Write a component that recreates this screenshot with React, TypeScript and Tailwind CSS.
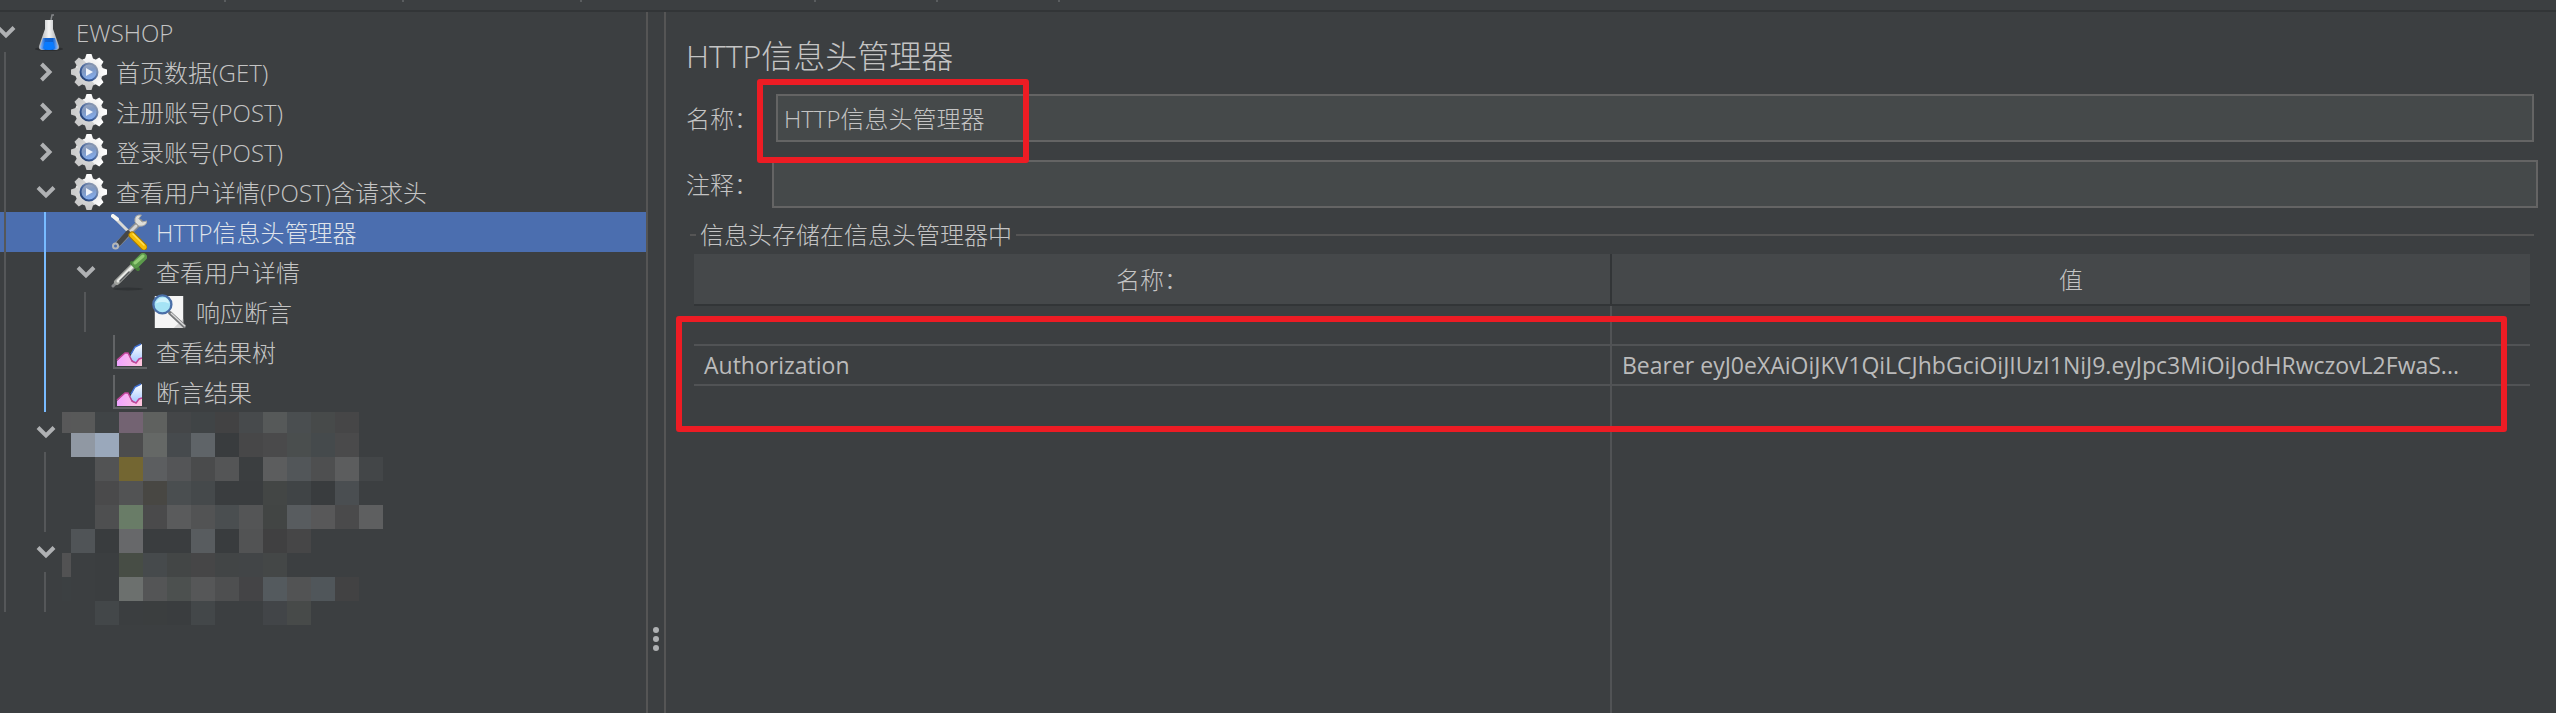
import { useState } from 'react'
import clsx from 'clsx'

type IconName = 'flask' | 'gear' | 'tools' | 'dropper' | 'assertion' | 'chart'
type Guide = 'gray' | 'blue'

type Node = {
  id: string
  label: string
  icon?: IconName
  guides: Guide[]
  toggle?: 'open' | 'closed'
}

const nodes: Node[] = [
  { id: 'plan', label: 'EWSHOP', icon: 'flask', guides: [], toggle: 'open' },
  { id: 'home', label: '首页数据(GET)', icon: 'gear', guides: ['gray'], toggle: 'closed' },
  { id: 'register', label: '注册账号(POST)', icon: 'gear', guides: ['gray'], toggle: 'closed' },
  { id: 'login', label: '登录账号(POST)', icon: 'gear', guides: ['gray'], toggle: 'closed' },
  { id: 'detail', label: '查看用户详情(POST)含请求头', icon: 'gear', guides: ['gray'], toggle: 'open' },
  { id: 'header', label: 'HTTP信息头管理器', icon: 'tools', guides: ['gray', 'blue'] },
  { id: 'sampler', label: '查看用户详情', icon: 'dropper', guides: ['gray', 'blue'], toggle: 'open' },
  { id: 'assert', label: '响应断言', icon: 'assertion', guides: ['gray', 'blue', 'gray'] },
  { id: 'results', label: '查看结果树', icon: 'chart', guides: ['gray', 'blue'] },
  { id: 'assertResults', label: '断言结果', icon: 'chart', guides: ['gray', 'blue'] },
  { id: 'hidden1', label: '', guides: ['gray'], toggle: 'open' },
  { id: 'hidden2', label: '', guides: ['gray', 'gray'] },
  { id: 'hidden3', label: '', guides: ['gray', 'gray'] },
  { id: 'hidden4', label: '', guides: ['gray'], toggle: 'open' },
  { id: 'hidden5', label: '', guides: ['gray', 'gray'] },
]

// censored part of the tree, one colour per block, '' is see-through
const mosaic = [
  ['#585859', '#585959', '#404446', '#736372', '#5f615f', '#444648', '#404446', '#424243', '#474a4c', '#565959', '#4a4e50', '#474a4a', '#464647', ''],
  ['', '#9098a3', '#9aa8bb', '#4c4c4d', '#656866', '#464a4d', '#5f6468', '#393c3e', '#474748', '#4a4a4b', '#4a4e4e', '#454a4c', '#4a4a4b', ''],
  ['', '', '#525354', '#736632', '#5c5e60', '#545557', '#4a4b4c', '#545556', '#3b3e40', '#5c5d5e', '#525659', '#4e4f50', '#5c5d5e', '#434648'],
  ['', '', '#4a4a4b', '#525354', '#484743', '#4a4e50', '#45494b', '#3a3d3f', '#3a3d3f', '#434645', '#404446', '#393c3e', '#4a4e51', ''],
  ['', '', '#4e4f50', '#697c67', '#4a4a4b', '#5a5b5c', '#525354', '#4a4e50', '#545556', '#424544', '#585c5f', '#585859', '#4a4a4b', '#5e5f60'],
  ['', '#505457', '#393c3e', '#67686a', '#3a3d3f', '#3a3d3f', '#585c5f', '#393c3e', '#525354', '#404041', '#464647', '', '', ''],
  ['#525253', '', '#3b3e40', '#474d45', '#464a4c', '#434646', '#464647', '#424546', '#424547', '#444747', '', '', '', ''],
  ['#3c4042', '', '#3b3e40', '#6c706e', '#545556', '#4c504f', '#565758', '#4e4f50', '#444446', '#545a5e', '#525354', '#50565a', '#424243', ''],
  ['', '', '#434749', '#3b3e40', '#3b3e3f', '#3a3d3f', '#434749', '', '', '#424548', '#474a49', '', '', ''],
]

const Mosaic = () => (
  <svg
    className="absolute left-[62px] top-[400px] pointer-events-none"
    width="321"
    height="213"
    shapeRendering="crispEdges"
    aria-hidden="true"
  >
    {mosaic.map((row, y) =>
      row.map((color, x) =>
        color ? (
          <rect
            key={`${x}-${y}`}
            x={x === 0 ? 0 : x * 24 - 15}
            y={y === 0 ? 0 : y * 24 - 3}
            width={x === 0 ? 9 : 24}
            height={y === 0 ? 21 : 24}
            fill={color}
          />
        ) : null
      )
    )}
  </svg>
)

const Flask = () => (
  <svg width="36" height="40" viewBox="0 0 36 40">
    <defs>
      <linearGradient id="glass" x1="0" x2="1">
        <stop offset="0" stopColor="#a4a8ac" />
        <stop offset=".5" stopColor="#f4f4f4" />
        <stop offset="1" stopColor="#9b9fa3" />
      </linearGradient>
      <linearGradient id="liquid" x1="0" x2="1">
        <stop offset="0" stopColor="#8dbbff" />
        <stop offset=".3" stopColor="#1465d2" />
        <stop offset=".7" stopColor="#0b5fd0" />
        <stop offset="1" stopColor="#8dbbff" />
      </linearGradient>
    </defs>
    <ellipse cx="18" cy="37" rx="14" ry="2" fill="#2c2e30" />
    <path d="M20 8 21 3h2" stroke="#85888a" strokeWidth="1.5" fill="none" />
    <path d="M14 8h8v9l6 17q1 4-4 4H12q-5 0-4-4l6-17z" fill="url(#glass)" />
    <path d="M12 26h12l3 9q0 3-5 3h-8q-5 0-5-3z" fill="url(#liquid)" />
    <path d="M12 36q6 4 12 0l-2-6h-8z" fill="#0a7bff" />
  </svg>
)

const Gear = () => (
  <svg width="36" height="36" viewBox="0 0 36 36">
    <defs>
      <linearGradient id="metal" gradientUnits="userSpaceOnUse" x1="0" x2="0" y1="0" y2="36">
        <stop offset="0" stopColor="#ffffff" />
        <stop offset=".5" stopColor="#e0e0e0" />
        <stop offset="1" stopColor="#c8c8c8" />
      </linearGradient>
      <linearGradient id="ring" x1="0" x2=".3" y1="0" y2="1">
        <stop offset="0" stopColor="#a3acbc" />
        <stop offset=".5" stopColor="#7f98c2" />
        <stop offset="1" stopColor="#86aeee" />
      </linearGradient>
      <linearGradient id="rim" x1="1" x2="0" y1="0" y2="1">
        <stop offset="0" stopColor="#a3abb8" />
        <stop offset=".6" stopColor="#3f609c" />
        <stop offset="1" stopColor="#1c3768" />
      </linearGradient>
    </defs>
    <g fill="url(#metal)">
      <circle cx="18" cy="18" r="14" />
      {[0, 45, 90, 135].map(angle => (
        <path
          key={angle}
          d={angle % 90 ? 'M15 0.500h6l1.500 6v23l-1.500 6h-6l-1.500-6v-23z' : 'M15.500 0h5l2 6v24l-2 6h-5l-2-6V6z'}
          transform={`rotate(${angle} 18 18)`}
        />
      ))}
    </g>
    <circle cx="18" cy="18" r="8.500" fill="url(#ring)" stroke="url(#rim)" strokeWidth="2" />
    <path d="M15 14v8l7-4z" fill="#f0f3fa" />
  </svg>
)

const Tools = () => (
  <svg width="36" height="36" viewBox="0 0 36 36" fill="none" strokeLinecap="round">
    <path d="M3 3 20 20" stroke="#d9d9d5" strokeWidth="3" />
    <path d="M2 2 6 5" stroke="#f7f7f3" strokeWidth="4" />
    <path d="M29 8 5 32" stroke="#8d8f90" strokeWidth="6" />
    <path d="M25 12 14 23" stroke="#d4d4d2" strokeWidth="3" />
    <path d="M17 19 8 29" stroke="#444648" strokeWidth="5" />
    <circle cx="4.500" cy="32" r="2.500" fill="#4b6eaf" stroke="#b4b6b8" strokeWidth="2" />
    <path d="M30 1q-7-1-6 7l4 4q7 1 8-5l-5 1-3-3z" fill="#deded9" stroke="#aaa9a4" strokeWidth="1" />
    <path d="M21 21 33 33" stroke="#a77a00" strokeWidth="7" />
    <path d="M21 21 33 33" stroke="#f5bd05" strokeWidth="5" />
    <path d="M22 20 33 31" stroke="#ffdf57" strokeWidth="1.500" />
  </svg>
)

const Dropper = () => (
  <svg width="36" height="38" viewBox="0 0 36 38" fill="none" strokeLinecap="round">
    <ellipse cx="17" cy="36" rx="15" ry="1.500" fill="#303335" />
    <path d="M2 33 8 27" stroke="#858789" strokeWidth="3" />
    <path d="M6 29 22 13" stroke="#a1a39f" strokeWidth="6" />
    <path d="M7 28 22 13" stroke="#e9eae6" strokeWidth="3" />
    <path d="M9 28 18 19" stroke="#55585a" strokeWidth="1.500" />
    <path d="M21 10 27 16" stroke="#447c38" strokeWidth="4" />
    <path d="M25 11 32 4" stroke="#5b9a4b" strokeWidth="8" />
    <path d="M24 10 32 3" stroke="#91cb75" strokeWidth="3" />
  </svg>
)

const Assertion = () => (
  <svg width="38" height="38" viewBox="0 0 38 38" fill="none">
    <path d="M4 2h30v34H4z" fill="#f5f5f5" />
    <path d="M24 36 34 26v10z" fill="#d5d5d5" />
    <path d="M20 20 35 34" stroke="#77797b" strokeWidth="4" strokeLinecap="round" />
    <path d="M21 20 36 34" stroke="#dadada" strokeWidth="1.500" />
    <circle cx="12" cy="11" r="9.500" fill="#a5e3f5" stroke="#4a6fa8" strokeWidth="2.500" />
    <path d="M5 10q2-6 8-6t6 6q-7-3-14 0z" fill="#d0f3fc" />
  </svg>
)

const Chart = () => (
  <svg width="36" height="36" viewBox="0 0 36 36" fill="none">
    <defs>
      <linearGradient id="pink" x1="0" x2="1">
        <stop offset="0" stopColor="#f0a3ff" />
        <stop offset="1" stopColor="#ffc5dc" />
      </linearGradient>
      <linearGradient id="sky" x1="0" x2="0" y1="0" y2="1">
        <stop offset="0" stopColor="#ffffff" />
        <stop offset="1" stopColor="#9dc3ff" />
      </linearGradient>
    </defs>
    <path d="M3 1v33h33" stroke="#626466" strokeWidth="2" />
    <path d="M19 23 24 13l7-3v17l-7 3z" fill="url(#sky)" />
    <path d="M20 20 24 13l6-3" stroke="#3f6fd0" strokeWidth="1.500" />
    <path d="M6 32v-5l8-8h3l4 9 4 1 3-4 3-1v8z" fill="url(#pink)" />
    <path d="m6 26 8-7h3l4 8 4 2 3-4 3-1" stroke="#c2459b" strokeWidth="1.500" />
  </svg>
)

const icons: Record<IconName, () => React.JSX.Element> = {
  flask: Flask,
  gear: Gear,
  tools: Tools,
  dropper: Dropper,
  assertion: Assertion,
  chart: Chart,
}

const TreeRow = ({ node, selected, onSelect }: { node: Node; selected: boolean; onSelect: () => void }) => {
  const Icon = node.icon ? icons[node.icon] : null

  return (
    <li
      role="treeitem"
      aria-selected={selected}
      onClick={onSelect}
      className={clsx('flex items-center h-10 cursor-default', selected && 'bg-[#4b6eaf] text-[#dfe3ea]')}
    >
      {node.guides.map((guide, i) => (
        <span key={i} className="w-10 h-10 pl-1 shrink-0">
          <span className={clsx('block w-[2px] h-10', guide === 'blue' ? 'bg-[#78bbff]' : 'bg-[#555759]')} />
        </span>
      ))}
      {node.toggle ? (
        <button className="w-[31px] h-10 shrink-0" aria-label={node.toggle === 'open' ? '折叠' : '展开'}>
          <svg className="overflow-visible" width="31" height="40" fill="none" stroke="#afb1b3" strokeWidth="4">
            <path d={node.toggle === 'open' ? 'M-2 15.500 6 23.500l8-8' : 'M1.500 12 9.500 20l-8 8'} />
          </svg>
        </button>
      ) : (
        <span className="w-[31px] shrink-0" />
      )}
      {Icon && (
        <span className="flex items-center justify-center w-9 h-10 shrink-0">
          <Icon />
        </span>
      )}
      <span className="pl-[9px] pt-[2px] whitespace-nowrap">{node.label}</span>
    </li>
  )
}

const TopBar = () => (
  <header className="h-3 shrink-0 border-b-2 border-[#323537]">
    <svg className="block" width="1060" height="2" fill="#5a5d5f" aria-hidden="true">
      {[224, 402, 580, 814, 936, 1058].map(x => (
        <rect key={x} x={x} width="2" height="2" />
      ))}
    </svg>
  </header>
)

const HeaderTable = () => (
  <div className="relative flex grow mt-[3px] mx-1">
    <table className="w-full h-full table-fixed border-separate border-spacing-0">
      <thead>
        <tr className="h-[52px] bg-[#45484a]">
          <th className="px-0 pb-0 pt-[2px] font-light border-b-2 border-r-2 border-[#323537]">名称：</th>
          <th className="px-0 pb-0 pt-[2px] font-light border-b-2 border-[#323537]">值</th>
        </tr>
      </thead>
      <tbody className="font-normal text-[23px] text-[#bbbbbb]">
        <tr className="h-10">
          <td className="p-0 border-b-2 border-r-2 border-[#515355]" />
          <td className="p-0 border-b-2 border-[#515355]" />
        </tr>
        <tr className="h-10">
          <td className="py-0 px-[10px] border-b-2 border-r-2 border-[#515355]">Authorization</td>
          <td className="py-0 px-[10px] border-b-2 border-[#515355] whitespace-nowrap">
            Bearer eyJ0eXAiOiJKV1QiLCJhbGciOiJIUzI1NiJ9.eyJpc3MiOiJodHRwczovL2FwaS...
          </td>
        </tr>
        <tr>
          <td className="p-0 border-r-2 border-[#515355]" />
          <td className="p-0" />
        </tr>
      </tbody>
    </table>
    <div className="absolute -left-[18px] right-[23px] top-[62px] h-[116px] border-6 border-[#ed1c24] rounded-[3px] pointer-events-none" />
  </div>
)

export default function App() {
  const [selected, setSelected] = useState('header')
  const [name, setName] = useState('HTTP信息头管理器')
  const [comment, setComment] = useState('')

  return (
    <div className="flex flex-col min-h-screen overflow-hidden bg-[#3c3f41] text-[#c4c4c4] text-[24px] leading-8 font-light font-['Open_Sans','Noto_Sans_CJK_SC',sans-serif]">
      <TopBar />
      <div className="flex grow">
        <nav className="relative w-[648px] shrink-0 border-r-2 border-[#555555]">
          <ul role="tree">
            {nodes.map(node => (
              <TreeRow
                key={node.id}
                node={node}
                selected={node.id === selected}
                onSelect={() => setSelected(node.id)}
              />
            ))}
          </ul>
          <Mosaic />
        </nav>

        <div className="flex flex-col items-center justify-end gap-[3px] w-[18px] shrink-0 pb-[62px] border-r-2 border-[#555555]">
          <span className="size-[6px] rounded-full bg-[#afb1b3]" />
          <span className="size-[6px] rounded-full bg-[#afb1b3]" />
          <span className="size-[6px] rounded-full bg-[#afb1b3]" />
        </div>

        <main className="flex flex-col grow min-w-0 pt-[22px] pl-5 pr-[18px]">
          <h1 className="text-[32px] leading-[44px]">HTTP信息头管理器</h1>

          <div className="flex items-center mt-4">
            <label htmlFor="name" className="w-[86px] pt-[2px] shrink-0">名称：</label>
            <div className="relative flex grow mx-1">
              <input
                id="name"
                className="w-full h-12 px-[6px] pb-[2px] bg-[#45494a] border-2 border-[#646464] outline-none"
                value={name}
                onChange={e => setName(e.target.value)}
              />
              <div className="absolute -left-[19px] -top-[15px] w-[272px] h-[84px] border-6 border-[#ed1c24] rounded-[3px] pointer-events-none" />
            </div>
          </div>

          <div className="flex items-center mt-[18px]">
            <label htmlFor="comment" className="w-[86px] pt-[2px] shrink-0">注释：</label>
            <input
              id="comment"
              className="grow h-12 px-[6px] pb-[2px] bg-[#45494a] border-2 border-[#646464] outline-none"
              value={comment}
              onChange={e => setComment(e.target.value)}
            />
          </div>

          <fieldset className="flex flex-col grow mt-[11px] mx-1 border-t-2 border-[#555555]">
            <legend className="ml-[6px] px-1">信息头存储在信息头管理器中</legend>
            <HeaderTable />
          </fieldset>
        </main>
      </div>
    </div>
  )
}
